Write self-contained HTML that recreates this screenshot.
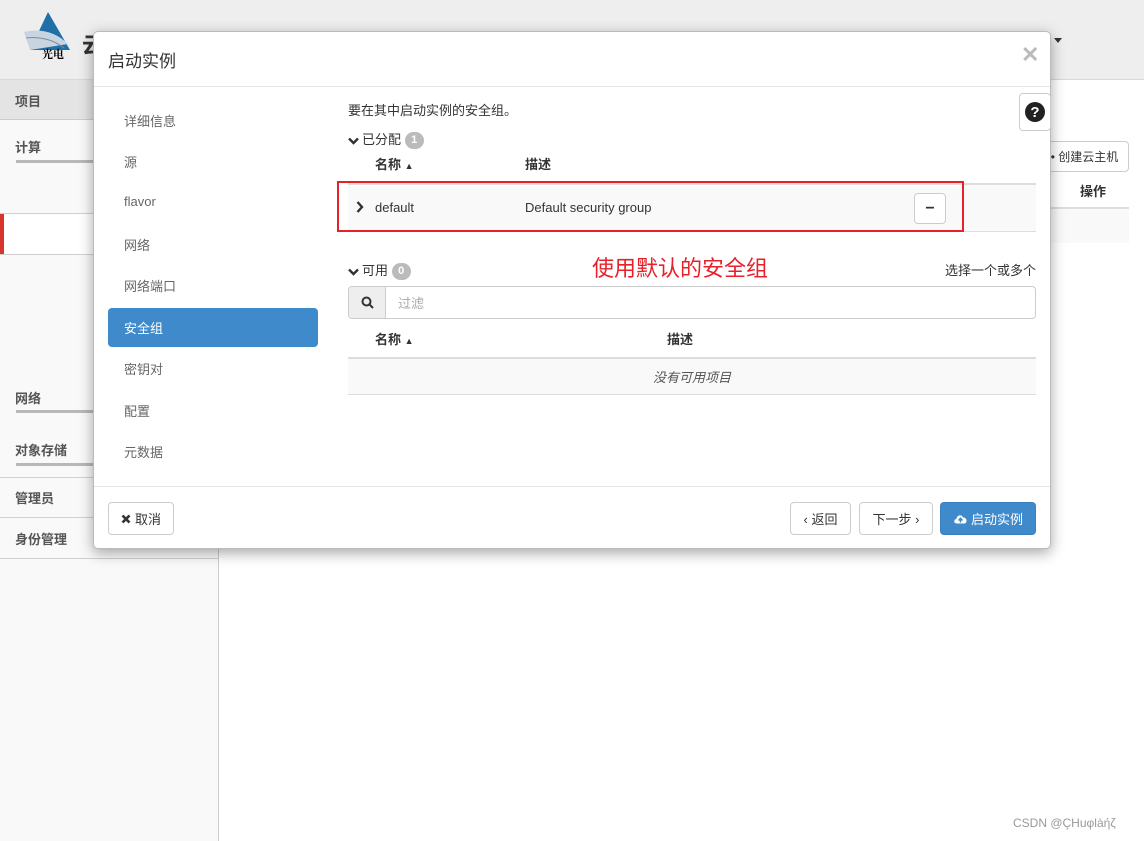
<!DOCTYPE html>
<html><head><meta charset="utf-8">
<style>
*{box-sizing:border-box;margin:0;padding:0}
body{width:1144px;height:841px;position:relative;overflow:hidden;background:#fff;font-family:"Liberation Sans","Noto Sans CJK SC",sans-serif;font-size:13px;color:#333}
.hdr{position:absolute;left:0;top:0;width:1144px;height:80px;background:#eeeeee;border-bottom:1px solid #d8d8d8}
.side{position:absolute;left:0;top:80px;width:219px;height:761px;background:#f9f9f9;border-right:1px solid #ccc}
.side .it{position:absolute;left:15px;font-weight:bold;font-size:13px;color:#555}
.side .bar{position:absolute;left:16px;width:203px;height:3px;background:#b8b8b8}
.side .ln{position:absolute;left:0;width:219px;height:1px;background:#d0d0d0}
.modal{position:absolute;left:93px;top:31px;width:958px;height:518px;background:#fff;border-radius:5px;box-shadow:0 4px 14px rgba(0,0,0,.35);border:1px solid #bbb}
.abs{position:absolute}
.nav{position:absolute;left:30px;font-size:13px;color:#666}
.btn{position:absolute;border:1px solid #ccc;border-radius:4px;background:#fff;font-size:13px;color:#333;display:flex;align-items:center;justify-content:center}
.badge{display:inline-block;width:19px;height:17px;border-radius:9px;background:#bbb;color:#fff;font-size:11px;font-weight:bold;text-align:center;line-height:17px;vertical-align:middle}
.chev{display:inline-block;vertical-align:middle;margin-right:3px}
</style></head><body>
<div class="hdr">
 <svg class="abs" style="left:20px;top:10px" width="56" height="52" viewBox="0 0 56 52"><polygon points="28,2 50,40 10,40" fill="#1f6fa8"/><path d="M4,22 C20,18 36,22 48,34 L10,40 Z" fill="#c8d4e0"/><path d="M6,28 C20,26 34,30 44,38" stroke="#7a8ea5" fill="none"/><text x="22" y="48" font-size="11" font-family="Noto Serif CJK SC,serif" font-weight="bold" fill="#000">光电</text></svg>
 <div class="abs" style="left:82px;top:28px;font-size:22px;font-weight:bold">云</div>
 <div class="abs" style="left:1054px;top:38px;width:0;height:0;border-left:4px solid transparent;border-right:4px solid transparent;border-top:5px solid #333"></div>
</div>
<div class="side">
 <div class="abs" style="left:0;top:0;width:219px;height:40px;background:#e4e4e4;border-bottom:1px solid #ccc"></div>
 <div class="it" style="top:11px">项目</div>
 <div class="it" style="top:57px">计算</div><div class="bar" style="top:80px"></div>
 <div class="ln" style="top:133px"></div>
 <div class="abs" style="left:0;top:134px;width:219px;height:40px;background:#fff"></div>
 <div class="abs" style="left:0;top:134px;width:4px;height:40px;background:#d9362b"></div>
 <div class="ln" style="top:174px"></div>
 <div class="it" style="top:308px">网络</div><div class="bar" style="top:330px"></div>
 <div class="it" style="top:360px">对象存储</div><div class="bar" style="top:383px"></div>
 <div class="ln" style="top:397px"></div>
 <div class="it" style="top:408px">管理员</div>
 <div class="ln" style="top:437px"></div>
 <div class="it" style="top:449px">身份管理</div>
 <div class="ln" style="top:478px"></div>
</div>
<div class="btn" style="left:1040px;top:141px;width:89px;height:31px;font-size:12px">• 创建云主机</div>
<div class="abs" style="left:1080px;top:181px;font-weight:bold">操作</div>
<div class="abs" style="left:1040px;top:207px;width:89px;height:2px;background:#ddd"></div>
<div class="abs" style="left:1040px;top:209px;width:89px;height:34px;background:#f9f9f9"></div>

<div class="modal">
 <div class="abs" style="left:14px;top:15px;font-size:17px;color:#333">启动实例</div>
 <div class="abs" style="left:927px;top:10px;font-size:22px;font-weight:bold;color:#bbb">✕</div>
 <div class="abs" style="left:0;top:54px;width:956px;height:1px;background:#e5e5e5"></div>
 <div class="nav" style="top:79px">详细信息</div>
 <div class="nav" style="top:120px">源</div>
 <div class="nav" style="top:162px">flavor</div>
 <div class="nav" style="top:203px">网络</div>
 <div class="nav" style="top:244px">网络端口</div>
 <div class="abs" style="left:14px;top:276px;width:210px;height:39px;background:#3f8acb;border-radius:4px;color:#fff;padding:10px 0 0 16px">安全组</div>
 <div class="nav" style="top:327px">密钥对</div>
 <div class="nav" style="top:369px">配置</div>
 <div class="nav" style="top:410px">元数据</div>

 <div class="abs" style="left:925px;top:61px;width:32px;height:38px;border:1px solid #ccc;border-radius:4px"><svg style="margin:7px 0 0 4px" width="22" height="22" viewBox="0 0 22 22"><circle cx="11" cy="11" r="10" fill="#222"/><text x="11" y="16" text-anchor="middle" font-size="15" font-weight="bold" fill="#fff" font-family="Liberation Sans">?</text></svg></div>

 <div class="abs" style="left:254px;top:68px">要在其中启动实例的安全组。</div>
 <div class="abs" style="left:254px;top:97px"><svg class="chev" width="11" height="8" viewBox="0 0 11 8"><path d="M1,1.5 L5.5,6 L10,1.5" stroke="#333" stroke-width="2.4" fill="none"/></svg>已分配 <span class="badge">1</span></div>
 <div class="abs" style="left:281px;top:122px;font-weight:bold">名称 <span style="font-size:9px">▲</span></div>
 <div class="abs" style="left:431px;top:122px;font-weight:bold">描述</div>
 <div class="abs" style="left:254px;top:151px;width:688px;height:2px;background:#ddd"></div>
 <div class="abs" style="left:254px;top:153px;width:688px;height:47px;background:#f9f9f9;border-bottom:1px solid #ddd"></div>
 <svg class="abs" style="left:262px;top:169px" width="8" height="12" viewBox="0 0 8 12"><path d="M1.5,1 L6,6 L1.5,11" stroke="#333" stroke-width="2.4" fill="none"/></svg>
 <div class="abs" style="left:281px;top:168px">default</div>
 <div class="abs" style="left:431px;top:168px">Default security group</div>
 <div class="btn" style="left:820px;top:161px;width:32px;height:31px;font-weight:bold;font-size:16px">−</div>
 <div class="abs" style="left:243px;top:149px;width:627px;height:51px;border:2px solid #e8202a"></div>

 <div class="abs" style="left:254px;top:228px"><svg class="chev" width="11" height="8" viewBox="0 0 11 8"><path d="M1,1.5 L5.5,6 L10,1.5" stroke="#333" stroke-width="2.4" fill="none"/></svg>可用 <span class="badge">0</span></div>
 <div class="abs" style="left:498px;top:219px;font-size:22px;color:#e8202a;font-family:'Noto Sans CJK SC',sans-serif">使用默认的安全组</div>
 <div class="abs" style="left:851px;top:228px">选择一个或多个</div>
 <div class="abs" style="left:254px;top:254px;width:688px;height:33px;border:1px solid #ccc;border-radius:4px;overflow:hidden">
  <div class="abs" style="left:0;top:0;width:37px;height:31px;background:#eee;border-right:1px solid #ccc"><svg style="margin:9px 0 0 12px" width="13" height="13" viewBox="0 0 13 13"><circle cx="5.5" cy="5.5" r="4" stroke="#333" stroke-width="2" fill="none"/><line x1="8.5" y1="8.5" x2="12" y2="12" stroke="#333" stroke-width="2"/></svg></div>
  <div class="abs" style="left:49px;top:6px;color:#aaa">过滤</div>
 </div>
 <div class="abs" style="left:281px;top:297px;font-weight:bold">名称 <span style="font-size:9px">▲</span></div>
 <div class="abs" style="left:573px;top:297px;font-weight:bold">描述</div>
 <div class="abs" style="left:254px;top:325px;width:688px;height:2px;background:#ddd"></div>
 <div class="abs" style="left:254px;top:327px;width:688px;height:36px;background:#f9f9f9;border-bottom:1px solid #ddd;text-align:center;padding-top:8px;font-style:italic;color:#555">没有可用项目</div>

 <div class="abs" style="left:0;top:454px;width:956px;height:1px;background:#e5e5e5"></div>
 <div class="btn" style="left:14px;top:470px;width:66px;height:33px"><svg width="10" height="10" viewBox="0 0 10 10" style="margin-right:4px"><path d="M1.5,1.5 L8.5,8.5 M8.5,1.5 L1.5,8.5" stroke="#333" stroke-width="2.6"/></svg>取消</div>
 <div class="btn" style="left:696px;top:470px;width:61px;height:33px">‹ 返回</div>
 <div class="btn" style="left:765px;top:470px;width:74px;height:33px">下一步 ›</div>
 <div class="btn" style="left:846px;top:470px;width:96px;height:33px;background:#3f8acb;border-color:#3a80bd;color:#fff"><svg width="15" height="11" viewBox="0 0 15 11" style="margin-right:3px"><path d="M3.5,10.5 C0.5,10.5 0.5,6 3.5,6 C3.5,2 9,1 10,4.5 C14,4 15,10.5 11,10.5 Z" fill="#fff"/><path d="M7.5,9.5 V5.5 M5.5,7.5 L7.5,5.3 L9.5,7.5" stroke="#3f8acb" stroke-width="1.5" fill="none"/></svg>启动实例</div>
</div>
<div class="abs" style="left:1013px;top:816px;font-size:12px;color:#999">CSDN @ÇHuφlàήζ</div>
</body></html>
